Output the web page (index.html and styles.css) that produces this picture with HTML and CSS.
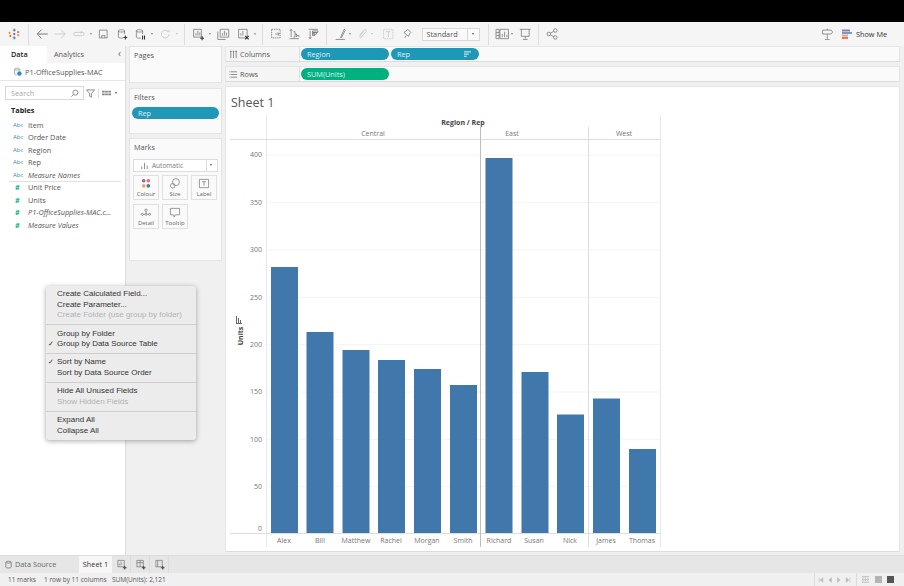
FILE: index.html
```html
<!DOCTYPE html>
<html lang="en">
<head>
<meta charset="utf-8">
<title>Sheet 1</title>
<link rel="stylesheet" href="styles.css">
</head>
<body>
<div class="blackbar"></div>
<header class="toolbar">
  <svg class="ic logo" viewBox="0 0 18 18"><path class="l-b" d="M9 2v4M7 4h4M9 12v4M7 14h4"/><path class="l-o" d="M3 6v3M1.500 7.500h3M14 9v3M12.500 10.500h3"/><path class="l-r" d="M4 10v3M2.500 11.500h3M14 5v3M12.500 6.500h3"/><path class="l-p" d="M9 7.500v3M7.500 9h3"/></svg>
  <span class="sep first"></span>
  <svg class="ic back" viewBox="0 0 18 18"><path d="M16 9H3M8 3.500 2.500 9 8 14.500"/></svg>
  <svg class="ic off" viewBox="0 0 18 18"><path d="M2 9h13M10 3.500 15.500 9 10 14.500"/></svg>
  <svg class="ic off" viewBox="0 0 18 18"><rect x="2" y="7" width="13" height="4" rx="1.500"/><path d="M11 5l2 2-2 1"/></svg>
  <span class="caret"></span>
  <svg class="ic" viewBox="0 0 18 18"><path d="M4 4h10v10H4zM7 14v-3h4v3"/></svg>
  <svg class="ic" viewBox="0 0 18 18"><path d="M4 5v8c0 1.500 6 1.500 6 1M4 5c0-2 8-2 8 0v4M4 5c0 2 8 2 8 0"/><path class="thick" d="M13 11v5M10.500 13.500h5"/></svg>
  <svg class="ic" viewBox="0 0 18 18"><path d="M4 5v8c0 1.500 6 1.500 6 1M4 5c0-2 8-2 8 0v4M4 5c0 2 8 2 8 0"/><path class="thick" d="M12 11v5M14.500 11v5"/></svg>
  <span class="caret"></span>
  <svg class="ic off" viewBox="0 0 18 18"><path d="M14 9a5 5 0 1 1-1.500-3.500M14 3v3h-3"/></svg>
  <span class="caret off-c"></span>
  <span class="sep"></span>
  <svg class="ic" viewBox="0 0 18 18"><path d="M3 3v10h10V3z"/><path d="M6 11V8M8.500 11V5M11 11V7"/><path class="thick" d="M14 12v5M11.500 14.500h5"/></svg>
  <span class="caret"></span>
  <svg class="ic gap1" viewBox="0 0 18 18"><path d="M2 6v10h10M5 13V3h11v10z"/><path d="M8 11V8M10.500 11V5M13 11V7"/></svg>
  <svg class="ic gap1" viewBox="0 0 18 18"><path d="M3 3v11h11V3z"/><path d="M6 11V8M8.500 11V5"/><path class="thick" d="M11.500 11.500l4.500 4.500M16 11.500 11.500 16"/></svg>
  <span class="caret"></span>
  <span class="sep"></span>
  <svg class="ic" viewBox="0 0 18 18"><path class="dash" d="M3 3h11v11H3z"/><path d="M8 9h5M11 7l2 2-2 2"/></svg>
  <svg class="ic" viewBox="0 0 18 18"><path d="M3 15h12M5 3v10M3.500 5 5 3l1.500 2M8 6h2v7H8M10 9h2v4M12 11h3v2"/></svg>
  <svg class="ic" viewBox="0 0 18 18"><path d="M3 3h12M5 15V5M3.500 13 5 15l1.500-2M8 5h7v2H8zM8 7h5v2H8zM8 9h3v2H8z"/></svg>
  <span class="sep"></span>
  <svg class="ic" viewBox="0 0 18 18"><path d="M10 12 14 3l1.500 1L11 13l-1.500 1zM3 16h12"/></svg>
  <span class="caret tight"></span>
  <svg class="ic off" viewBox="0 0 18 18"><path d="M6 10l5-6c2-2 4 0 2.500 2L8 13c-1 1.500-3 0-2-1.500l5-6"/></svg>
  <span class="caret tight off-c"></span>
  <svg class="ic off gap3" viewBox="0 0 18 18"><path class="dash" d="M3 3h12v12H3z"/><path d="M6 6h6M9 6v7"/></svg>
  <svg class="ic" viewBox="0 0 18 18"><path d="M7 14l2-3M6 7l6 5 1-3 2-2-4-4-2 2z"/></svg>
  <div class="fitbox"><span class="fitlabel">Standard</span><span class="fitarrow"><span class="caret dark"></span></span></div>
  <span class="sep fitsep"></span>
  <svg class="ic" viewBox="0 0 18 18"><path d="M1 3h4v12H1zM6 3h11v12H6z"/><path d="M1 7h4M1 11h4M9 13V9M12 13V6M15 13v-3"/></svg>
  <span class="caret tight"></span>
  <svg class="ic" viewBox="0 0 18 18"><path d="M2 3h14M4 3v9h10V3M9 12v3M6 16h6"/></svg>
  <span class="sep"></span>
  <svg class="ic share" viewBox="0 0 18 18"><circle cx="4.500" cy="9" r="2.300"/><circle cx="13" cy="4.500" r="2.300"/><circle cx="13" cy="13.500" r="2.300"/><path d="M6.500 8l4.500-2.500M6.500 10l4.500 2.500"/></svg>
  <span class="grow"></span>
  <svg class="ic" viewBox="0 0 18 18"><path d="M3 4h11l2 2.500L14 9H3zM9 4V2M9 9v6M6 16h6"/></svg>
  <div class="showme">
    <svg class="smicon" viewBox="0 0 11 11"><path class="sm1" d="M0 1.500h8"/><path class="sm2" d="M0 4h10"/><path class="sm3" d="M0 6.500h6"/><path class="sm4" d="M0 9h6"/></svg>
    <span>Show Me</span>
  </div>
</header>

<div class="workspace">
  <aside class="datapane">
    <div class="tabs">
      <div class="tab active">Data</div>
      <div class="tab">Analytics<span class="collapse">‹</span></div>
    </div>
    <div class="source">
      <svg class="srcicon" viewBox="0 0 12 12"><path class="srcstroke" d="M2 3v6c0 1 2 1.500 3 1.500M2 3c0-2 7-2 7 0v2M2 3c0 1.500 7 1.500 7 0"/><circle class="srcdot" cx="8.500" cy="8.500" r="3"/></svg>
      <span>P1-OfficeSupplies-MAC</span>
    </div>
    <div class="searchrow">
      <div class="searchbox"><span>Search</span>
        <svg class="mini" viewBox="0 0 10 10"><circle cx="6" cy="4" r="2.800"/><path d="M4 6 1.500 8.500"/></svg>
      </div>
      <svg class="mini filter" viewBox="0 0 10 10"><path d="M.5 1h9L6 5v4L4 8V5z"/></svg>
      <span class="vsep"></span>
      <svg class="mini gridi" viewBox="0 0 10 10"><path class="solid" d="M0 2h3v2H0zM3.500 2h3v2h-3zM7 2h3v2H7zM0 5h3v2H0zM3.500 5h3v2h-3zM7 5h3v2H7z"/></svg>
      <span class="caret dark sm"></span>
    </div>
    <div class="tablesh">Tables</div>
    <ul class="fields">
      <li><span class="abc">Abc</span>Item</li>
      <li><span class="abc">Abc</span>Order Date</li>
      <li><span class="abc">Abc</span>Region</li>
      <li><span class="abc">Abc</span>Rep</li>
      <li class="it div"><span class="abc">Abc</span>Measure Names</li>
      <li><span class="hash">#</span>Unit Price</li>
      <li><span class="hash">#</span>Units</li>
      <li class="it"><span class="hash">#</span>P1-OfficeSupplies-MAC.c...</li>
      <li class="it"><span class="hash">#</span>Measure Values</li>
    </ul>
  </aside>

  <section class="cards">
    <div class="card pages"><div class="cardtitle">Pages</div></div>
    <div class="card filters">
      <div class="cardtitle">Filters</div>
      <div class="pill filterpill">Rep</div>
    </div>
    <div class="card marks">
      <div class="cardtitle">Marks</div>
      <div class="marktype">
        <svg class="mini" viewBox="0 0 10 10"><path d="M2 9V6M5 9V2M8 9V5"/></svg>
        <span>Automatic</span>
        <span class="markarrow"><span class="caret dark sm"></span></span>
      </div>
      <div class="markgrid">
        <div class="markbtn"><svg class="mk colour" viewBox="0 0 12 12"><circle class="c1" cx="3.500" cy="3" r="2"/><circle class="c2" cx="8.500" cy="3" r="2"/><circle class="c3" cx="3.500" cy="8.500" r="2"/><circle class="c4" cx="8.500" cy="8.500" r="2"/></svg>Colour</div>
        <div class="markbtn"><svg class="mk" viewBox="0 0 12 12"><circle cx="7" cy="4.500" r="3.800"/><circle cx="3.500" cy="8.500" r="2.500"/></svg>Size</div>
        <div class="markbtn"><svg class="mk" viewBox="0 0 12 12"><path d="M1 1.500h10v9H1zM4 4h4M6 4v4.500"/></svg>Label</div>
        <div class="markbtn"><svg class="mk" viewBox="0 0 12 12"><circle cx="6" cy="3.500" r="1.300"/><circle cx="2" cy="8" r="1.100"/><circle cx="6" cy="8" r="1.100"/><circle cx="10" cy="8" r="1.100"/><path d="M3 8h2M7 8h2M6 5v2"/></svg>Detail</div>
        <div class="markbtn"><svg class="mk" viewBox="0 0 12 12"><path d="M1 1.500h10v7H6.500L5 11 4.500 8.500H1z"/></svg>Tooltip</div>
      </div>
    </div>
  </section>

  <main class="main">
    <div class="shelf">
      <div class="shelflabel"><svg class="mini" viewBox="0 0 10 10"><path d="M2 1v8M5 1v8M8 1v8M1 1.500h2M4 1.500h2M7 1.500h2"/></svg>Columns</div>
      <div class="pills">
        <div class="pill blue">Region</div>
        <div class="pill blue">Rep<svg class="sorti" viewBox="0 0 10 8"><path d="M1 1h8M1 3.500h5.500M1 6h3"/></svg></div>
      </div>
    </div>
    <div class="shelf">
      <div class="shelflabel"><svg class="mini" viewBox="0 0 10 10"><path d="M2 2h7M2 5h7M2 8h7M.5 2h1M.5 5h1M.5 8h1"/></svg>Rows</div>
      <div class="pills"><div class="pill green">SUM(Units)</div></div>
    </div>
    <div class="sheet">
      <h1 class="sheettitle">Sheet 1</h1>
      <svg class="chart" viewBox="225 112 440 440">
        <g class="grid">
          <path d="M266 486.700H660M266 439.300H660M266 392H660M266 344.600H660M266 297.300H660M266 249.900H660M266 202.600H660M266 155.200H660"/>
        </g>
        <g class="rect-bars">
          <rect x="271" y="267" width="27" height="266"/>
          <rect x="306.500" y="332" width="27" height="201"/>
          <rect x="342.500" y="350" width="27" height="183"/>
          <rect x="378" y="360" width="27" height="173"/>
          <rect x="414" y="369" width="27" height="164"/>
          <rect x="450" y="385" width="27" height="148"/>
          <rect x="485.500" y="158" width="27" height="375"/>
          <rect x="521.500" y="372" width="27" height="161"/>
          <rect x="557" y="414.500" width="27" height="118.500"/>
          <rect x="593" y="398.500" width="27" height="134.500"/>
          <rect x="629" y="449" width="27" height="84"/>
        </g>
        <path class="ln light" d="M266.500 115V139M266.500 139V533M660.500 115V547M266.500 533V547"/>
        <path class="ln" d="M230 139.500H660M230 533.500H660"/>
        <path class="ln dark" d="M480.500 127V547"/>
        <path class="ln" d="M588.500 127V547"/>
        <text class="hdr" x="463" y="125">Region / Rep</text>
        <g class="ctext">
          <text x="373" y="136">Central</text>
          <text x="512" y="136">East</text>
          <text x="624" y="136">West</text>
          <text x="284" y="543">Alex</text>
          <text x="320" y="543">Bill</text>
          <text x="356" y="543">Matthew</text>
          <text x="391" y="543">Rachel</text>
          <text x="427" y="543">Morgan</text>
          <text x="463" y="543">Smith</text>
          <text x="499" y="543">Richard</text>
          <text x="534" y="543">Susan</text>
          <text x="570" y="543">Nick</text>
          <text x="606" y="543">James</text>
          <text x="642" y="543">Thomas</text>
        </g>
        <g class="ytext">
          <text x="262" y="157">400</text>
          <text x="262" y="205">350</text>
          <text x="262" y="252">300</text>
          <text x="262" y="300">250</text>
          <text x="262" y="347">200</text>
          <text x="262" y="394">150</text>
          <text x="262" y="442">100</text>
          <text x="262" y="489">50</text>
          <text x="262" y="531">0</text>
        </g>
        <text class="ylabel" transform="translate(243 336) rotate(-90)">Units</text>
        <path class="axsort" d="M236.500 316V323M238.500 318V323M240.500 320V323M236 323.500H242"/>
      </svg>
    </div>
  </main>
</div>

<nav class="tabbar">
  <div class="dstab"><svg class="mini" viewBox="0 0 10 10"><path d="M2 2.500v5.500c0 1.200 6 1.200 6 0V2.500c0-1.500-6-1.500-6 0 0 1.200 6 1.200 6 0"/></svg>Data Source</div>
  <div class="sheettab">Sheet 1</div>
  <div class="addtab"><svg class="mk" viewBox="0 0 12 12"><path d="M1.500 1.500h7v7h-7zM3 7V5M5 7V3"/><path class="thick" d="M9 7.500v4M7 9.500h4"/></svg></div>
  <div class="addtab"><svg class="mk" viewBox="0 0 12 12"><path d="M1.500 1.500h7v7h-7zM1.500 4h7M5 1.500v7"/><path class="thick" d="M9 7.500v4M7 9.500h4"/></svg></div>
  <div class="addtab"><svg class="mk" viewBox="0 0 12 12"><path d="M1.500 1.500h7v7h-7zM3.500 1.500v7"/><path class="thick" d="M9 7.500v4M7 9.500h4"/></svg></div>
</nav>
<footer class="status">
  <span class="st1">11 marks</span>
  <span class="st2">1 row by 11 columns</span>
  <span>SUM(Units): 2,121</span>
  <span class="grow"></span>
  <div class="pager">
    <svg class="pg" viewBox="0 0 8 8"><path d="M1.500 1v6M6.500 1 3 4l3.500 3z"/></svg>
    <svg class="pg" viewBox="0 0 8 8"><path d="M6 1 2.500 4 6 7z"/></svg>
    <svg class="pg" viewBox="0 0 8 8"><path d="M2 1l3.500 3L2 7z"/></svg>
    <svg class="pg" viewBox="0 0 8 8"><path d="M6.500 1v6M1.500 1 5 4 1.500 7z"/></svg>
  </div>
  <div class="views">
    <svg class="vw" viewBox="0 0 10 10"><path class="dash" d="M0 1h10M0 5h10M0 9h10M1.500 0v10M5 0v10M8.500 0v10"/></svg>
    <span class="vwb mid"></span>
    <span class="vwb on"></span>
  </div>
</footer>

<div class="menu">
  <div class="mgroup">
    <div class="mi">Create Calculated Field...</div>
    <div class="mi">Create Parameter...</div>
    <div class="mi dis">Create Folder (use group by folder)</div>
  </div>
  <div class="mgroup">
    <div class="mi">Group by Folder</div>
    <div class="mi chk">Group by Data Source Table</div>
  </div>
  <div class="mgroup">
    <div class="mi chk">Sort by Name</div>
    <div class="mi">Sort by Data Source Order</div>
  </div>
  <div class="mgroup">
    <div class="mi">Hide All Unused Fields</div>
    <div class="mi dis">Show Hidden Fields</div>
  </div>
  <div class="mgroup">
    <div class="mi">Expand All</div>
    <div class="mi">Collapse All</div>
  </div>
</div>
</body>
</html>
```
FILE: styles.css
```css
* { box-sizing: border-box; }
html, body { margin: 0; padding: 0; }
body {
  width: 904px;
  height: 586px;
  overflow: hidden;
  position: relative;
  background: #f0f0f0;
  font-family: "Open Sans", "Liberation Sans", sans-serif;
  font-size: 7.3px;
  color: #555;
}

.blackbar { height: 22px; background: #000; }

/* toolbar */
.toolbar {
  height: 24px;
  display: flex;
  align-items: center;
  background: #f5f5f5;
}
.ic {
  width: 18.5px;
  height: 14px;
  flex: none;
  fill: none;
  stroke: #777;
  stroke-width: 1;
}
.ic.off { stroke: #c4c4c4; }
.ic.back { stroke: #555; }
.ic .thick { stroke: #333; stroke-width: 1.4; }
.ic .dash, .vw .dash { stroke-dasharray: 2 1; }
.logo { margin-left: 5px; stroke-width: 1.2; }
.l-b { stroke: #4e79a7; }
.l-o { stroke: #f28e2b; }
.l-r { stroke: #e15759; }
.l-p { stroke: #59598e; }
.sep {
  width: 1px;
  height: 21px;
  flex: none;
  margin: 0 4px 0 3.500px;
  background: #dcdcdc;
}
.sep.first { margin: 0 4px 0 4px; }
.caret {
  width: 6px;
  height: 3px;
  flex: none;
  position: relative;
}
.caret::after {
  content: "";
  position: absolute;
  left: 1.500px;
  top: 0;
  border-left: 1.500px solid transparent;
  border-right: 1.500px solid transparent;
  border-top: 2px solid #888;
}
.caret.off-c::after { border-top-color: #c8c8c8; }
.caret.dark::after { border-top-color: #555; }
.caret.tight { margin-left: -2px; }
.caret.sm { margin-left: 2px; }
.gap1 { margin-left: 1px; }
.gap3 { margin-left: 3px; }
.fitbox {
  width: 58px;
  height: 13px;
  margin-left: 6px;
  display: flex;
  flex: none;
  background: #fafafa;
  border: 1px solid #d8d8d8;
  line-height: 11px;
}
.fitlabel { flex: 1; padding-left: 4px; }
.fitarrow {
  width: 12px;
  border-left: 1px solid #d8d8d8;
  display: flex;
  align-items: center;
  justify-content: center;
}
.fitsep { margin-left: 8.500px; }
.share { margin-left: 0; }
.grow { flex: 1; }
.showme {
  width: 62px;
  margin-left: 6px;
  display: flex;
  align-items: center;
  gap: 3px;
  color: #333;
}
.smicon { width: 11px; height: 11px; fill: none; stroke-width: 2; }
.sm1 { stroke: #8e7fb0; }
.sm2 { stroke: #6f9bd1; }
.sm3 { stroke: #f2a65a; }
.sm4 { stroke: #ec6f7c; }

/* workspace */
.workspace {
  height: 509px;
  display: flex;
  background: #f0f0f0;
}
.datapane {
  width: 126px;
  flex: none;
  background: #fff;
  border-right: 1px solid #dcdcdc;
}
.tabs { display: flex; height: 17px; background: #f5f5f5; }
.tab {
  width: 47px;
  line-height: 17px;
  padding-left: 11px;
  color: #555;
  white-space: nowrap;
  position: relative;
}
.tab + .tab { flex: 1; padding-left: 7px; }
.tab.active { background: #fff; color: #222; font-weight: 600; }
.collapse {
  position: absolute;
  right: 4px;
  top: 0;
  font-size: 10px;
  line-height: 15px;
  color: #666;
}
.source {
  height: 18px;
  display: flex;
  align-items: center;
  padding-left: 13px;
  gap: 3px;
  color: #555;
  border-bottom: 1px solid #e6e6e6;
}
.srcicon { width: 9px; height: 11px; fill: none; }
.srcstroke { stroke: #777; stroke-width: .8; }
.srcdot { fill: #2a8fc2; }
.searchrow {
  margin-top: 5px;
  height: 14px;
  padding-left: 5px;
  display: flex;
  align-items: center;
}
.searchbox {
  width: 79px;
  height: 14px;
  padding: 0 4px 0 5px;
  display: flex;
  align-items: center;
  justify-content: space-between;
  border: 1px solid #d8d8d8;
  color: #a8a8a8;
}
.mini {
  width: 9px;
  height: 9px;
  flex: none;
  fill: none;
  stroke: #777;
  stroke-width: .9;
}
.mini.filter { margin-left: 2px; }
.vsep { width: 1px; height: 9px; margin: 0 3px; background: #ddd; }
.mini .solid { fill: #888; stroke: none; }
.tablesh {
  margin-top: 4px;
  padding-left: 11px;
  height: 13px;
  line-height: 13px;
  font-weight: 700;
  color: #222;
}
.fields { list-style: none; margin: 1.500px 0 0; padding: 0; }
.fields li {
  height: 12.500px;
  line-height: 12.500px;
  padding-left: 13px;
  display: flex;
  white-space: nowrap;
  color: #555;
}
.fields .it { font-style: italic; }
.fields .div { position: relative; }
.fields .div::after {
  content: "";
  position: absolute;
  left: 9px;
  right: 4px;
  bottom: -.500px;
  height: 1px;
  background: #e2e2e2;
}
.abc {
  width: 15px;
  flex: none;
  font-size: 6px;
  font-style: normal;
  color: #3a8fb0;
}
.hash {
  width: 15px;
  padding-left: 2px;
  flex: none;
  font-style: normal;
  font-weight: 700;
  color: #00b180;
}

/* cards column */
.cards {
  width: 93px;
  flex: none;
  margin-left: 3px;
  display: flex;
  flex-direction: column;
  gap: 4.500px;
}
.card {
  background: #fafafa;
  border: 1px solid #e4e4e4;
  padding: 0 3px;
}
.cardtitle { padding-left: 1px; height: 13px; line-height: 13px; margin-top: 2px; color: #555; }
.pages { height: 37px; }
.filters { height: 46px; }
.marks { height: 123px; }
.pill {
  height: 12px;
  border-radius: 6px;
  line-height: 12px;
  padding-left: 6px;
  color: #dff1f6;
  display: flex;
  align-items: center;
  justify-content: space-between;
}
.filterpill {
  margin: 3px 0 0 -1px;
  width: 87px;
  background: #1f97b6;
}
.marktype {
  margin-top: 5px;
  height: 13px;
  display: flex;
  align-items: center;
  padding-left: 6px;
  gap: 3px;
  background: #fff;
  border: 1px solid #dcdcdc;
  color: #777;
  font-size: 6.5px;
}
.marktype span:nth-child(2) { flex: 1; }
.markarrow {
  width: 11px;
  height: 11px;
  border-left: 1px solid #dcdcdc;
  display: flex;
  align-items: center;
}
.markarrow .caret { margin-left: 1px; }
.markgrid {
  margin-top: 3px;
  display: grid;
  grid-template-columns: repeat(3, 26px);
  grid-auto-rows: 25px;
  gap: 4px 3px;
}
.markbtn {
  background: #fafafa;
  border: 1px solid #e0e0e0;
  display: flex;
  flex-direction: column;
  align-items: center;
  justify-content: flex-end;
  gap: 1px;
  font-size: 6px;
  line-height: 8px;
  color: #666;
  padding-bottom: 1px;
}
.mk { width: 12px; height: 11px; fill: none; stroke: #777; stroke-width: .8; }
.mk .thick { stroke: #444; stroke-width: 1.2; }
.colour { stroke: none; }
.c1 { fill: #8e6fa8; }
.c2 { fill: #e8736e; }
.c3 { fill: #f2a65a; }
.c4 { fill: #4e79a7; }

/* main area */
.main {
  width: 675px;
  flex: none;
  margin-left: 3px;
  display: flex;
  flex-direction: column;
  gap: 4px;
}
.shelf {
  height: 16px;
  display: flex;
  background: #fafafa;
  border: 1px solid #e6e6e6;
  border-bottom: 1.500px solid #dcdcdc;
}
.shelflabel {
  width: 74px;
  flex: none;
  padding-left: 3px;
  display: flex;
  align-items: center;
  gap: 2px;
  background: #f5f5f5;
  border-right: 1px solid #e0e0e0;
  color: #555;
}
.pills { display: flex; gap: 2px; padding: 1px 0 0 1px; }
.pill.blue { width: 88px; background: #1f97b6; }
.pill.green { width: 88px; background: #00b180; }
.sorti { width: 9px; height: 7px; margin-right: 7px; fill: none; stroke: #fff; stroke-width: 1; }
.sheet {
  height: 466px;
  background: #fff;
  border: 1px solid #e6e6e6;
  border-bottom: 1.500px solid #dcdcdc;
}
.sheettitle {
  margin: 0;
  height: 25px;
  padding: 7px 0 0 5px;
  font-size: 12.500px;
  line-height: 18px;
  font-weight: 400;
  color: #555;
}
.chart {
  display: block;
  width: 440px;
  height: 440px;
  margin-left: -1px;
}
.chart text { font-family: "Open Sans", "Liberation Sans", sans-serif; font-size: 7px; fill: #777; }
.grid path { fill: none; stroke: #f4f4f4; stroke-width: 1; }
.rect-bars rect { fill: #4078ab; }
.ln { fill: none; stroke: #dedede; stroke-width: 1; }
.ln.light { stroke: #e8e8e8; }
.ln.dark { stroke: #bdbdbd; }
.chart .hdr { text-anchor: middle; font-weight: 700; fill: #444; }
.ctext text { text-anchor: middle; }
.ytext text { text-anchor: end; }
.chart .ylabel { text-anchor: middle; font-weight: 700; fill: #444; }
.axsort { fill: none; stroke: #666; stroke-width: 1; }

/* bottom */
.tabbar {
  height: 18px;
  display: flex;
  align-items: stretch;
  background: #e6e6e6;
  border-top: 1px solid #dcdcdc;
}
.dstab {
  width: 79px;
  padding: 0 0 1px 4px;
  display: flex;
  align-items: center;
  gap: 2px;
  color: #666;
}
.sheettab {
  width: 33px;
  background: #f7f7f7;
  text-align: center;
  line-height: 16px;
  color: #333;
}
.addtab {
  width: 19px;
  padding-left: 2px;
  display: flex;
  align-items: center;
  justify-content: center;
  border-right: 1px solid #dcdcdc;
}
.status {
  height: 13px;
  display: flex;
  align-items: center;
  padding-left: 8px;
  background: #f0f0f0;
  font-size: 6.5px;
  color: #555;
}
.st1 { width: 36px; }
.st2 { width: 68px; }
.pager {
  width: 43px;
  height: 13px;
  display: flex;
  align-items: center;
  gap: 3px;
  padding-left: 3px;
  border-left: 1px solid #dcdcdc;
  border-right: 1px solid #dcdcdc;
}
.pg { width: 6px; height: 6px; fill: #bbb; stroke: #bbb; stroke-width: .8; flex: none; }
.views {
  width: 47px;
  display: flex;
  align-items: center;
  padding-left: 5px;
  gap: 5.500px;
}
.vw { width: 7px; height: 7px; stroke: #aaa; stroke-width: 1; fill: none; }
.vwb { width: 7px; height: 7px; }
.vwb.mid { background: #b4b4b4; }
.vwb.on { background: #555; }

/* context menu */
.menu {
  position: absolute;
  left: 46px;
  top: 286px;
  width: 150px;
  padding-top: 3px;
  background: #ececec;
  border-radius: 3px;
  box-shadow: 0 1px 5px rgba(0, 0, 0, .35);
  font-family: "Liberation Sans", Arial, sans-serif;
  font-size: 8px;
  color: #333;
}
.mgroup { padding-bottom: 3.250px; }
.mgroup + .mgroup { border-top: 1px solid #cfcfcf; padding-top: 3.250px; }
.mi {
  height: 10.700px;
  line-height: 10.700px;
  padding-left: 11px;
  position: relative;
  white-space: nowrap;
}
.mi.dis { color: #b2b2b2; }
.mi.chk::before {
  content: "✓";
  position: absolute;
  left: 2px;
  top: 0;
  font-family: "DejaVu Sans", sans-serif;
  font-size: 7px;
}
```
